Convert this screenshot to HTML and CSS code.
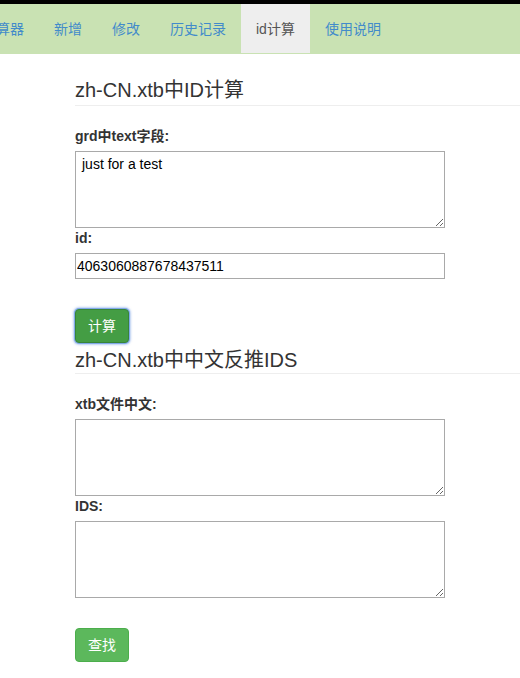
FILE: index.html
```html
<!DOCTYPE html>
<html lang="zh-CN">
<head>
<meta charset="utf-8">
<title>id计算</title>
<link rel="stylesheet" href="styles.css">
</head>
<body>
<nav class="navbar">
  <ul class="nav">
    <li class="nav-first"><a href="#">计算器</a></li>
    <li><a href="#">新增</a></li>
    <li><a href="#">修改</a></li>
    <li><a href="#">历史记录</a></li>
    <li class="active"><a href="#">id计算</a></li>
    <li><a href="#">使用说明</a></li>
  </ul>
</nav>
<main class="container">
  <section class="block">
    <h3 class="page-header first">zh-CN.xtb中ID计算</h3>
    <label class="label">grd中text字段:</label>
    <textarea class="field area">just for a test</textarea>
    <label class="label">id:</label>
    <input class="field input" type="text" value="4063060887678437511">
    <button class="btn btn-active" type="button">计算</button>
  </section>
  <section class="block">
    <h3 class="page-header second">zh-CN.xtb中中文反推IDS</h3>
    <label class="label">xtb文件中文:</label>
    <textarea class="field area"></textarea>
    <label class="label">IDS:</label>
    <textarea class="field area"></textarea>
    <button class="btn" type="button">查找</button>
  </section>
</main>
</body>
</html>
```
FILE: styles.css
```css
* { box-sizing: border-box; }
html, body { margin: 0; padding: 0; }
body {
  font-family: "Liberation Sans", Arial, "Noto Sans CJK SC", sans-serif;
  font-size: 14px;
  line-height: 20px;
  color: #333;
  background: #fff;
  overflow: hidden;
}
.navbar {
  border-top: 4px solid #000;
  background: #c9e2b3;
  padding-bottom: 1px;
}
.nav {
  list-style: none;
  margin: 0 0 0 -33px;
  padding: 0;
  display: flex;
}
.nav li { flex: none; }
.nav a {
  display: block;
  padding: 15px 15px 14px;
  line-height: 20px;
  color: #428bca;
  text-decoration: none;
  white-space: nowrap;
}
.nav .active a {
  background: #eee;
  color: #555;
}
.container {
  padding-left: 75px;
}
.block {
  display: flex;
  flex-direction: column;
  align-items: flex-start;
}
.page-header {
  align-self: stretch;
  font-size: 20px;
  font-weight: 400;
  line-height: 22px;
  margin: 0 0 20px;
  border-bottom: 1px solid #eee;
  color: #333;
}
.page-header.first { margin-top: 25px; padding-bottom: 4px; }
.page-header.second { margin-top: 6px; padding-bottom: 2px; }
.label {
  display: block;
  font-weight: bold;
  margin-bottom: 5px;
  line-height: 20px;
}
.field {
  display: block;
  width: 370px;
  border: 1px solid #a9a9a9;
  font-family: "Liberation Sans", Arial, "Noto Sans CJK SC", sans-serif;
  font-size: 14px;
  color: #000;
  margin: 0;
  background: #fff;
}
.area {
  height: 77px;
  padding: 4px 6px;
  resize: vertical;
  line-height: 17px;
}
.input {
  height: 26px;
  padding: 1px 1px;
  margin-bottom: 30px;
}
.area + .btn { margin-top: 30px; }
.btn {
  display: inline-block;
  height: 34px;
  padding: 6px 12px;
  font-family: "Liberation Sans", Arial, "Noto Sans CJK SC", sans-serif;
  font-size: 14px;
  line-height: 20px;
  color: #fff;
  background: #5cb85c;
  border: 1px solid #4cae4c;
  border-radius: 4px;
}
.btn-active {
  background: #449d44;
  border-color: #398439;
  box-shadow: 0 0 0 1px #7fa9e8, 0 0 2px 2px rgba(120, 160, 230, 0.5);
}
```
